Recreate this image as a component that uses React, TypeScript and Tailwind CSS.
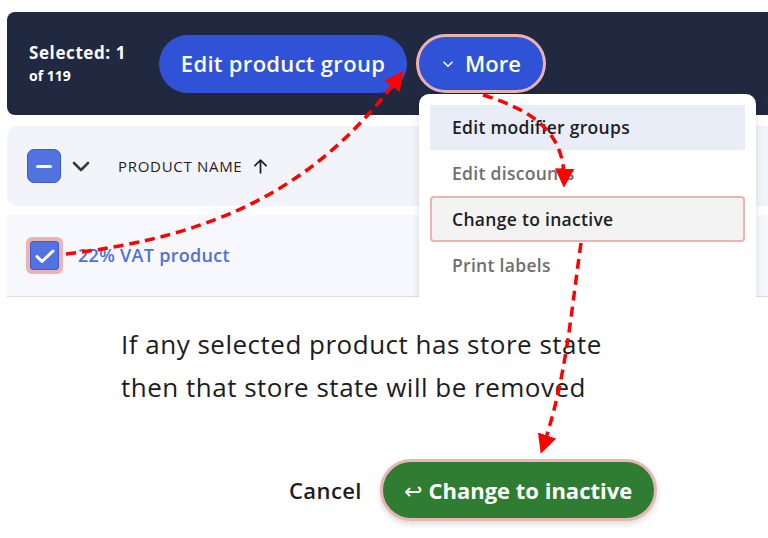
import React from "react";

const font = { fontFamily: '"Open Sans", "Noto Sans", sans-serif' };

function ChevronDown({ className }: { className?: string }) {
  return (
    <svg viewBox="0 0 24 24" className={className} fill="none" stroke="currentColor" strokeWidth={2.6} strokeLinecap="round" strokeLinejoin="round">
      <path d="M5 9l7 7 7-7" />
    </svg>
  );
}

export default function App() {
  return (
    <div className="relative w-[768px] h-[538px] overflow-hidden bg-white" style={font}>
      {/* top cropped UI */}
      <div className="relative h-[297px] overflow-hidden">
        <div className="pt-[12px] pl-[7px]">
          <div className="flex items-center h-[103px] bg-[#212940] rounded-l-[8px] pl-[22px]">
            <div className="flex flex-col text-white font-bold leading-none w-[130px]">
              <span className="text-[17px] tracking-[0.6px]">Selected: 1</span>
              <span className="text-[14px] mt-[8px]">of 119</span>
            </div>
            <div className="flex items-center justify-center h-[58px] w-[248px] rounded-full bg-[#3052d6] text-white text-[22px] font-semibold tracking-[0.3px]">
              Edit product group
            </div>
            <div className="ml-[9px] flex items-center justify-center gap-[10px] h-[59px] w-[130px] rounded-full bg-[#3052d6] border-[3px] border-[#e9b3b3] text-white text-[22px] font-semibold">
              <ChevronDown className="w-[14px] h-[14px]" />
              <span>More</span>
            </div>
          </div>
        </div>
        <div className="mt-[11px] ml-[7px] h-[80px] bg-[#f3f4fa] rounded-l-[10px] flex items-center pl-[20px]">
          <div className="w-[34px] h-[34px] rounded-[7px] bg-[#5272e0] border border-[#3a5bd4] flex items-center justify-center">
            <div className="w-[16px] h-[3px] bg-white rounded-sm" />
          </div>
          <ChevronDown className="w-[24px] h-[24px] ml-[8px] text-[#3a3a3a]" />
          <span className="ml-[25px] text-[15px] text-[#1e1e24] tracking-[0.7px]">PRODUCT NAME</span>
          <svg viewBox="0 0 24 24" className="w-[19px] h-[19px] ml-[9px] text-[#1e1e24]" fill="none" stroke="currentColor" strokeWidth={2.2} strokeLinecap="round" strokeLinejoin="round">
            <path d="M12 20V4M5 11l7-7 7 7" />
          </svg>
        </div>
        <div className="mt-[9px] ml-[7px] h-[82px] bg-[#f7f8fd] border-b border-[#dcdde3] flex items-center pl-[19px]">
          <div className="w-[37px] h-[37px] rounded-[6px] bg-[#ebb3b3] flex items-center justify-center">
            <div className="w-[29px] h-[29px] rounded-[3px] bg-[#5272e0] border border-[#3a5bd4] flex items-center justify-center">
              <svg viewBox="0 0 24 24" className="w-[24px] h-[24px] shrink-0" fill="none" stroke="white" strokeWidth={3} strokeLinecap="round" strokeLinejoin="round">
                <path d="M4 12.5l5 5L20 7" />
              </svg>
            </div>
          </div>
          <span className="ml-[15px] text-[18px] font-semibold text-[#5070d8] tracking-[0.3px]">22% VAT product</span>
        </div>

        {/* dropdown menu */}
        <div className="absolute left-[419px] top-[94px] w-[337px] h-[230px] bg-white rounded-[10px] shadow-[0_2px_8px_rgba(0,0,0,0.12)] px-[11px] pt-[11px]">
          <div className="h-[45px] bg-[#e9edf8] flex items-center pl-[22px] text-[17.5px] tracking-[0.3px] font-semibold text-[#1e1e24]">Edit modifier groups</div>
          <div className="h-[46px] flex items-center pl-[22px] text-[17.5px] tracking-[0.3px] font-semibold text-[#6e6e72]">Edit discounts</div>
          <div className="h-[46px] flex items-center pl-[20px] text-[17.5px] tracking-[0.3px] font-semibold text-[#1e1e24] bg-[#f3f3f3] border-[2px] border-[#ebb3b3] rounded-[4px]">Change to inactive</div>
          <div className="h-[46px] flex items-center pl-[22px] text-[17.5px] tracking-[0.3px] font-semibold text-[#6e6e72]">Print labels</div>
        </div>
      </div>

      {/* dialog text */}
      <div className="pl-[121px] pt-[26px] text-[26px] leading-[43px] font-medium text-[#1c1c24] tracking-[0.5px]">
        <p>If any selected product has store state</p>
        <p>then that store state will be removed</p>
      </div>

      <div className="flex items-center mt-[50px] pl-[289px]">
        <span className="text-[22px] font-semibold text-[#1c1c24] tracking-[0.4px]">Cancel</span>
        <div className="ml-[18px] h-[62px] w-[277px] rounded-full bg-[#2e7d32] border-[3px] border-[#eab5b5] shadow-[0_3px_6px_rgba(0,0,0,0.15)] flex items-center justify-center gap-[6px] text-white text-[22px] font-bold">
          <span className="font-normal">↩</span>
          <span>Change to inactive</span>
        </div>
      </div>

      {/* annotation arrows */}
      <svg className="absolute left-0 top-0 pointer-events-none" width={768} height={538} viewBox="0 0 768 538">
        <defs>
          <marker id="head" viewBox="0 0 10 10" refX="8" refY="5" markerWidth="5.5" markerHeight="5.5" orient="auto" markerUnits="strokeWidth">
            <path d="M0 0L10 5L0 10z" fill="#ff0000" />
          </marker>
        </defs>
        <g fill="none" stroke="#ff0000" strokeWidth={3.5} strokeDasharray="10 6">
          <path d="M66 254 C 220 236, 320 185, 401 74" markerEnd="url(#head)" />
          <path d="M483 95 C 530 110, 566 130, 564 184" markerEnd="url(#head)" />
          <path d="M581 243 C 570 320, 566 380, 542 450" markerEnd="url(#head)" />
        </g>
      </svg>
    </div>
  );
}
